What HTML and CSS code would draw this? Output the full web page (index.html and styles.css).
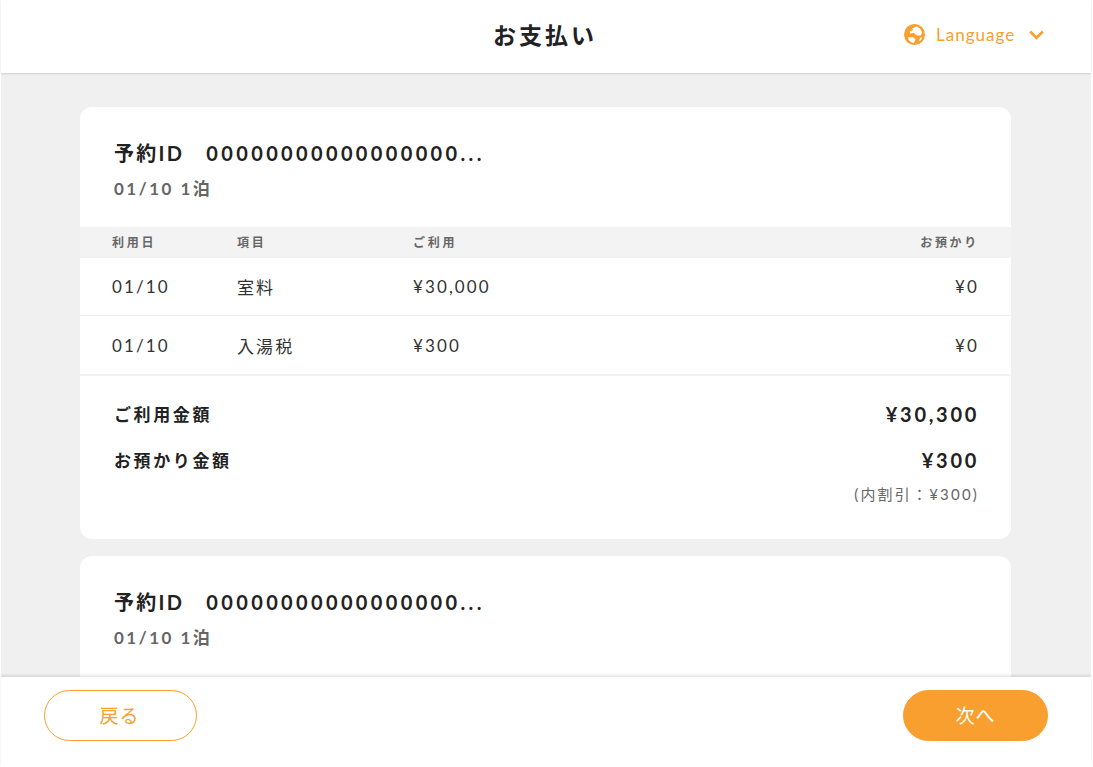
FILE: index.html
```html
<!DOCTYPE html>
<html lang="ja">
<head>
<meta charset="utf-8">
<title>お支払い</title>
<link rel="stylesheet" href="styles.css">
</head>
<body>
<div class="app">
  <header class="header">
    <h1 class="title">お支払い</h1>
    <div class="lang">
      <svg class="globe" viewBox="0 0 20 20" width="21" height="21"><circle cx="10" cy="10" r="10" fill="#f99f2f"/><path d="M12 2.2 L7.5 4.5 L9 5.8 L5.5 7 L6 9 L9.5 8.5 L12.5 11 L16 11 L17.2 8 L15.5 4.5 Z" fill="#fff"/><path d="M4 12.5 L8.5 12.5 L11 14.5 L9.5 18 L6.5 17.2 L4.2 15 Z" fill="#fff"/><path d="M15.5 13 L17.5 12.5 L16 15.5 L14 16.5 Z" fill="#fff"/></svg>
      <span class="lang-text">Language</span>
      <svg class="chev" viewBox="0 0 15 10" width="15" height="10"><path d="M1.2 1.5 L7.5 7.8 L13.8 1.5" fill="none" stroke="#f99f2f" stroke-width="2.6"/></svg>
    </div>
  </header>
  <main class="main">
    <section class="card">
      <div class="card-head">
        <div class="res-id"><span>予約ID</span><span class="res-num">00000000000000000...</span></div>
        <div class="stay">01/10 1泊</div>
      </div>
      <div class="row row-head"><span class="c1">利用日</span><span class="c2">項目</span><span class="c3">ご利用</span><span class="c4">お預かり</span></div>
      <div class="row row-body"><span class="c1">01/10</span><span class="c2">室料</span><span class="c3">¥30,000</span><span class="c4">¥0</span></div>
      <div class="row row-body"><span class="c1">01/10</span><span class="c2">入湯税</span><span class="c3">¥300</span><span class="c4">¥0</span></div>
      <div class="summary">
        <div class="sum-line"><span class="sum-label">ご利用金額</span><span class="sum-val">¥30,300</span></div>
        <div class="sum-line"><span class="sum-label">お預かり金額</span><span class="sum-val">¥300</span></div>
        <div class="sum-note">(内割引：¥300)</div>
      </div>
    </section>
    <section class="card">
      <div class="card-head">
        <div class="res-id"><span>予約ID</span><span class="res-num">00000000000000000...</span></div>
        <div class="stay">01/10 1泊</div>
      </div>
    </section>
  </main>
  <footer class="footer">
    <button class="btn btn-back">戻る</button>
    <button class="btn btn-next">次へ</button>
  </footer>
</div>
</body>
</html>
```
FILE: styles.css
```css
* { box-sizing: border-box; }
html, body { margin: 0; height: 100%; background: #fff; overflow: hidden; }
body {
  font-family: Lato, "Noto Sans CJK JP", sans-serif;
  color: #222;
}
.app {
  width: 1090px;
  height: 767px;
  margin-left: 1px;
  display: flex;
  flex-direction: column;
  background: #f0f0f0;
}
.header {
  height: 73px;
  flex: none;
  background: #fff;
  display: flex;
  align-items: center;
  justify-content: center;
  position: relative;
  box-shadow: 0 1px 2px rgba(0,0,0,.14);
  z-index: 2;
}
.title {
  margin: 0 2px 3px 0;
  font-size: 23px;
  line-height: 34px;
  font-weight: 700;
  letter-spacing: 3px;
  color: #222;
}
.lang {
  position: absolute;
  left: 903px;
  top: 24px;
  display: flex;
  align-items: center;
  color: #f99f2f;
}
.globe { margin-right: 11px; }
.lang-text { font-size: 17px; letter-spacing: 1px; width: 85px; }
.chev { margin-left: 8px; }
.main {
  flex: 1;
  min-height: 0;
  overflow: hidden;
  padding: 34px 80px 0 79px;
  display: flex;
  flex-direction: column;
  gap: 17px;
}
.card {
  flex: none;
  background: #fff;
  border-radius: 12px;
  overflow: hidden;
  height: 432px;
}
.card-head { padding: 31px 34px 0; height: 120px; }
.res-id {
  font-size: 20px;
  font-weight: 700;
  letter-spacing: 2.3px;
  line-height: 30px;
  display: flex;
  gap: 22px;
  color: #222;
}
.res-num { letter-spacing: 3.35px; }
.stay {
  margin-top: 8px;
  font-size: 17px;
  font-weight: 700;
  letter-spacing: 2.5px;
  line-height: 26px;
  color: #666;
}
.row {
  display: flex;
  align-items: center;
  padding: 0 32px;
  letter-spacing: 2.1px;
}
.c1 { width: 125px; }
.c2 { width: 176px; }
.c3 { flex: 1; }
.c4 { text-align: right; }
.row-head {
  height: 31px;
  padding-bottom: 2px;
  background: #f3f3f3;
  font-size: 12px;
  font-weight: 700;
  color: #666;
  letter-spacing: 2.7px;
}
.row-body {
  height: 58px;
  font-size: 17px;
  color: #333;
  border-bottom: 1px solid #eee;
}
.row-body + .row-body { border-bottom: 0; }
.summary {
  padding: 23px 32px 0 34px;
  border-top: 2px solid #f3f3f3;
}
.sum-line {
  display: flex;
  justify-content: space-between;
  align-items: center;
  height: 30px;
  margin-bottom: 16px;
}
.sum-label { font-size: 17px; font-weight: 700; letter-spacing: 2.6px; color: #222; margin-bottom: 2px; }
.sum-val { font-size: 20px; font-weight: 700; letter-spacing: 2.7px; color: #222; }
.sum-note {
  text-align: right;
  margin-top: -8px;
  font-size: 15px;
  letter-spacing: 2.2px;
  color: #666;
}
.footer {
  flex: none;
  height: 90px;
  background: #fff;
  display: flex;
  justify-content: space-between;
  padding: 13px 43px 0;
  box-shadow: 0 -2px 2px rgba(0,0,0,.1);
  z-index: 2;
}
.btn {
  height: 51px;
  padding: 0 0 2px;
  border-radius: 26px;
  font-family: inherit;
  font-size: 19px;
  letter-spacing: 1px;
}
.btn-back { width: 153px; padding-right: 2px; background: #fff; border: 1px solid #f99f2f; color: #f99f2f; }
.btn-next { width: 145px; background: #f99f2f; border: 1px solid #f99f2f; color: #fff; }
```
